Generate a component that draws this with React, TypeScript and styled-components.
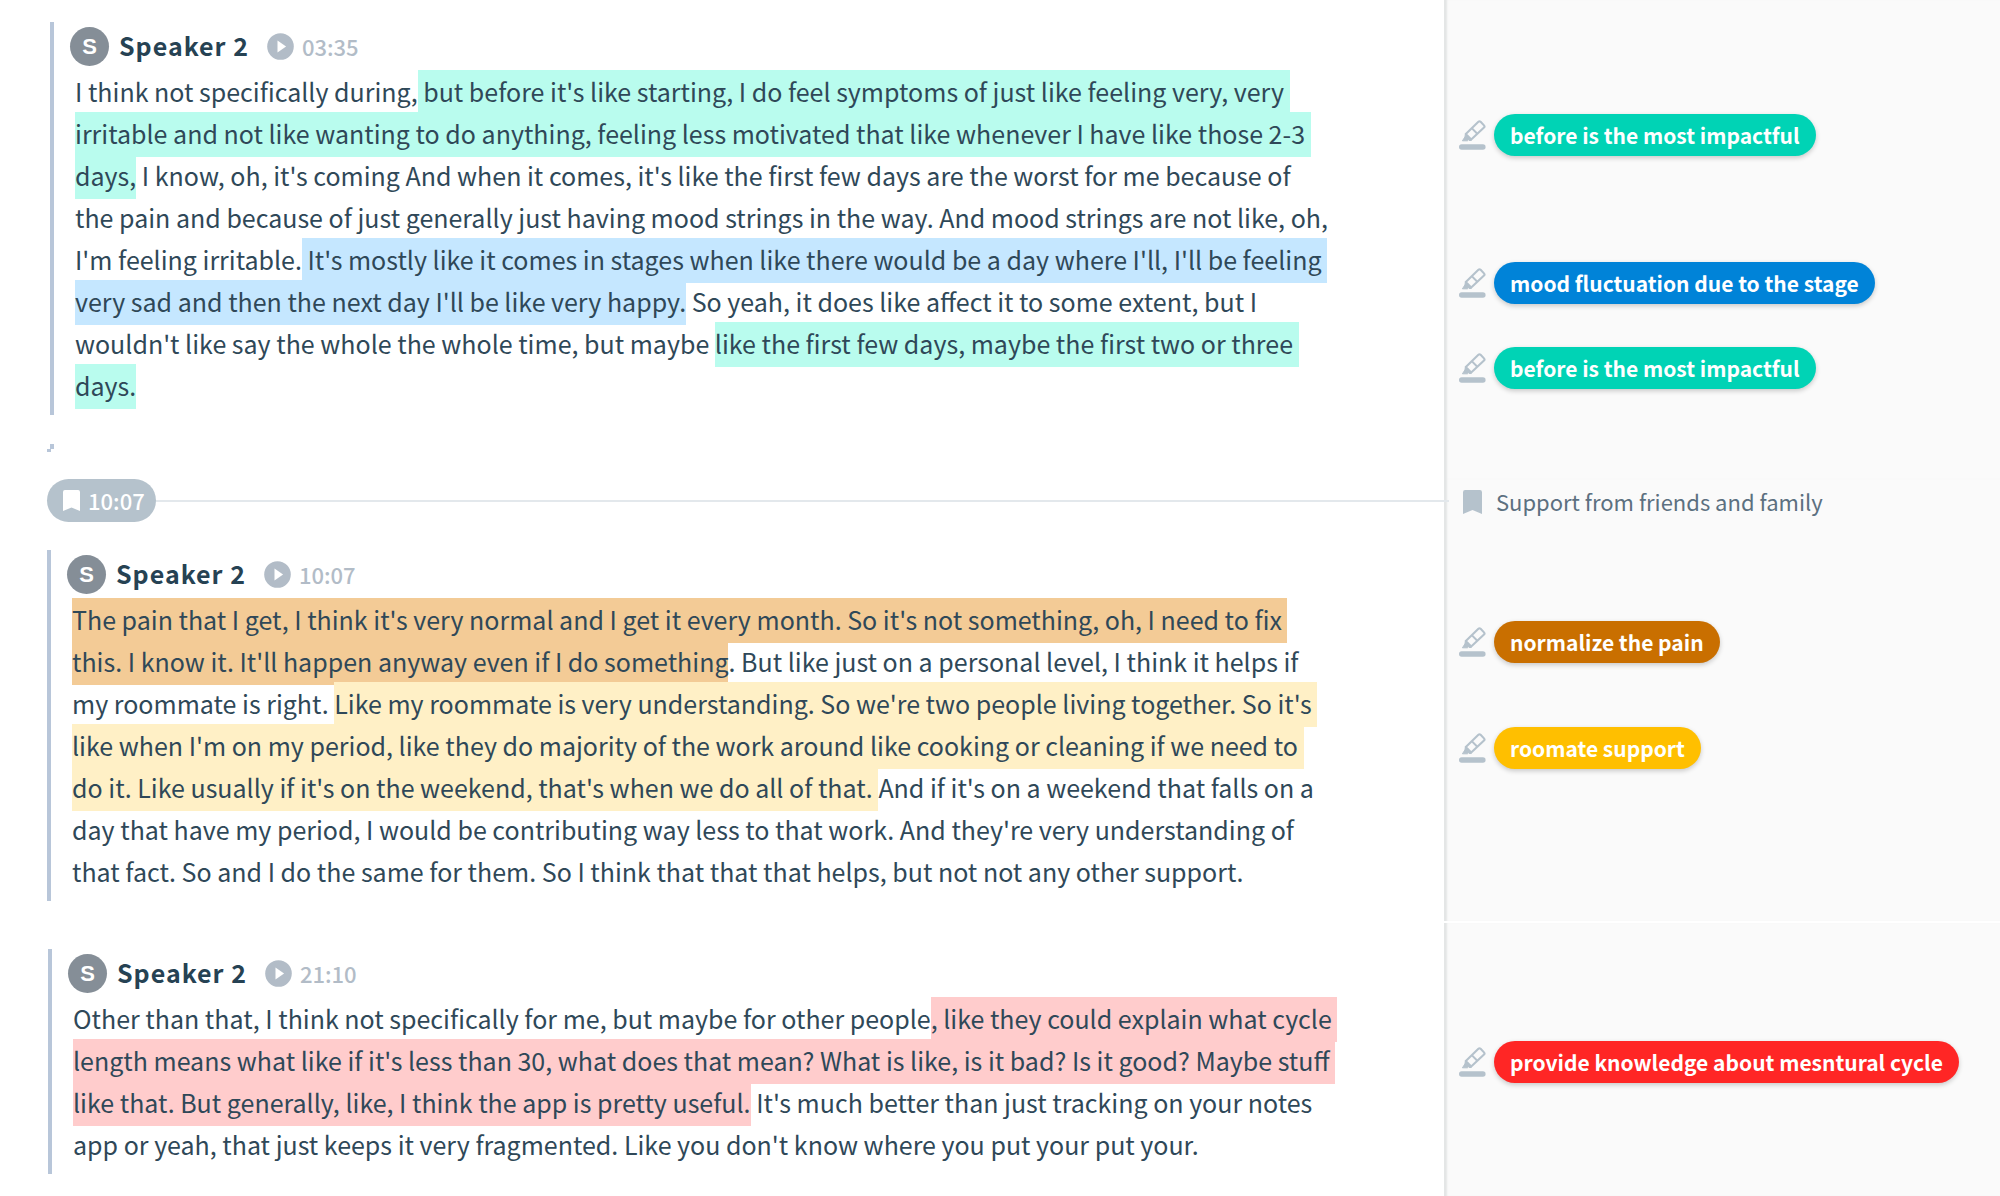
import React from "react";
import styled, { createGlobalStyle } from "styled-components";

const GlobalStyle = createGlobalStyle`
  *, *::before, *::after { box-sizing: border-box; }
  body {
    margin: 0;
    background: #ffffff;
    color: #2f4858;
    font-family: "Noto Sans CJK SC", "Noto Sans", sans-serif;
    font-size: 25px;
    line-height: 42px;
  }
  button {
    margin: 0;
    padding: 0;
    border: 0;
    background: none;
    color: inherit;
    font: inherit;
    cursor: pointer;
  }
`;

const Page = styled.main`
  display: flex;
  flex-direction: column;
  min-height: 100vh;
`;

const Section = styled.section<{ $last?: boolean }>`
  display: grid;
  grid-template-columns: minmax(0, 1444fr) minmax(0, 556fr);
  flex: ${(p) => (p.$last ? "1 0 auto" : "none")};
  margin-top: ${(p) => (p.$last ? 2 : 0)}px;
`;

const Transcript = styled.div<{ $inset: number; $top: number; $bottom: number }>`
  padding: ${(p) => `${p.$top}px 0 ${p.$bottom}px ${p.$inset}px`};
`;

const Sidebar = styled.aside<{ $top: number }>`
  padding: ${(p) => p.$top}px 0 0 13px;
  border-left: 2px solid #e4e6e6;
  background: #fafafa;
  box-shadow: inset 2px 0 2px -1px #e4e6e6;
`;

const Turn = styled.article`
  padding: 5px 0 9px 16px;
  border-left: 4px solid #b8c6d9;
`;

const TurnHeader = styled.header`
  display: flex;
  align-items: center;
  height: 39px;
  margin-bottom: 4px;
`;

const Avatar = styled.span`
  display: grid;
  place-items: center;
  width: 39px;
  height: 39px;
  border-radius: 50%;
  background: #858e97;
  color: #ffffff;
  font: 700 22px/39px "Liberation Sans", Arial, sans-serif;
`;

const SpeakerName = styled.h2`
  margin: 0 18px 0 10px;
  padding-bottom: 4px;
  color: #264253;
  font-size: 25px;
  font-weight: 600;
  line-height: 38px;
  letter-spacing: 1px;
`;

const PlayButton = styled.button`
  display: flex;
  align-items: center;
  gap: 8px;
  color: #b2bcc7;
  font-size: 22px;
  font-weight: 500;
  line-height: 38px;
`;

const Time = styled.time`
  padding-bottom: 2px;
`;

const Paragraph = styled.p<{ $measure: number }>`
  max-width: ${(p) => p.$measure}px;
  margin: 0 0 0 5px;
  white-space: pre-wrap;
`;

const Mark = styled.mark<{ $color: string }>`
  padding: 3px 0 6px;
  background: ${(p) => p.$color};
  color: inherit;
`;

const Divider = styled.div`
  position: relative;
  z-index: 1;
  display: flex;
  align-items: center;
  margin: 0 -5px 28px 0;

  &::after {
    content: "";
    flex: 1;
    height: 2px;
    background: #e3e8ec;
  }
`;

const TimePill = styled.button`
  display: flex;
  align-items: center;
  gap: 8px;
  height: 43px;
  padding: 0 11px 0 16px;
  border-radius: 22px;
  background: #b5c2cc;
  color: #ffffff;
  font-size: 22px;
  font-weight: 500;
  line-height: 38px;
`;

const Fleck = styled.svg`
  display: block;
  margin: 29px 0 0 -3px;
`;

const TagRow = styled.div<{ $gap?: number }>`
  display: flex;
  align-items: center;
  gap: 8px;
  margin-top: ${(p) => p.$gap ?? 0}px;
`;

const Tag = styled.button<{ $color: string }>`
  height: 42px;
  padding: 0 16px;
  border-radius: 21px;
  background: ${(p) => p.$color};
  box-shadow: 0 2px 5px rgba(0, 0, 0, 0.2);
  color: #ffffff;
  font-size: 21px;
  font-weight: 600;
  line-height: 42px;
  white-space: nowrap;
`;

const Chapter = styled.div`
  display: flex;
  align-items: center;
  gap: 14px;
  height: 46px;
  padding-left: 4px;
  color: #5c7080;
  font-size: 22px;

  svg {
    color: #b5c2cc;
  }

  span {
    padding-bottom: 2px;
  }
`;

const BookmarkIcon = ({ width, height }: { width: number; height: number }) => (
  <svg width={width} height={height} viewBox="0 0 18 22" fill="currentColor" preserveAspectRatio="none" aria-hidden="true">
    <path d="M2 0h14A2 2 0 0 1 18 2V22l-9-3.6L0 22V2A2 2 0 0 1 2 0Z" />
  </svg>
);

const PlayIcon = () => (
  <svg width="27" height="27" viewBox="0 0 27 27" aria-hidden="true">
    <circle cx="13.5" cy="13.5" r="13.3" fill="#b2bcc7" />
    <path d="M10.5 7.5v12l8.6-6Z" fill="#ffffff" />
  </svg>
);

const HighlighterIcon = () => (
  <svg width="27" height="30" viewBox="0 0 27 30" fill="none" stroke="#b5c2cc" aria-hidden="true">
    <path d="M19.4 1.8a1.6 1.6 0 0 1 2.2 0l3.4 3.6a1.6 1.6 0 0 1 0 2.2L12.2 19.6 6.8 14Z" strokeWidth="2.1" strokeLinejoin="round" />
    <path d="m13 8.4 5.3 5.4" strokeWidth="2" />
    <path d="M6.4 14.2 5.9 17l-2.5 3.8h5l1.2-1 1.4 1 1.6-.9Z" fill="#b5c2cc" strokeWidth="1" strokeLinejoin="round" />
    <path d="M2.7 27h21.2" strokeWidth="5.4" strokeLinecap="round" />
  </svg>
);

const TEAL = "#b9fcee";
const BLUE = "#c5e7ff";
const ORANGE = "#f3cb96";
const YELLOW = "#fff0c6";
const PINK = "#ffcccc";

interface SpeakerTurnProps {
  time: string;
  measure?: number;
  children: React.ReactNode;
}

const SpeakerTurn = ({ time, measure = 1256, children }: SpeakerTurnProps) => (
  <Turn>
    <TurnHeader>
      <Avatar aria-hidden="true">S</Avatar>
      <SpeakerName>Speaker 2</SpeakerName>
      <PlayButton type="button">
        <PlayIcon />
        <Time>{time}</Time>
      </PlayButton>
    </TurnHeader>
    <Paragraph $measure={measure}>{children}</Paragraph>
  </Turn>
);

const CodeTag = ({ color, gap, label }: { color: string; gap?: number; label: string }) => (
  <TagRow $gap={gap}>
    <HighlighterIcon />
    <Tag type="button" $color={color}>{label}</Tag>
  </TagRow>
);

export default function App() {
  return (
    <>
      <GlobalStyle />
      <Page>
        <Section>
          <Transcript $inset={50} $top={22} $bottom={27}>
            <SpeakerTurn time="03:35">
              I think not specifically during,
              <Mark $color={TEAL}>
                {" but before it's like starting, I do feel symptoms of just like feeling very, very irritable and not like wanting to do anything, feeling less motivated that like whenever I have like those 2-3 days,"}
              </Mark>
              {" I know, oh, it's coming And when it comes, it's like the first few days are the worst for me because of the pain and because of just generally just having mood strings in the way. And mood strings are not like, oh, I'm feeling irritable."}
              <Mark $color={BLUE}>
                {" It's mostly like it comes in stages when like there would be a day where I'll, I'll be feeling very sad and then the next day I'll be like very happy."}
              </Mark>
              {" So yeah, it does like affect it to some extent, but I wouldn't like say the whole the whole time, but maybe "}
              <Mark $color={TEAL}>like the first few days, maybe the first two or three days.</Mark>
            </SpeakerTurn>
            <Fleck width="7" height="8" viewBox="0 0 7 8" fill="#b8c6d9" aria-hidden="true">
              <path d="M3 0h4v5H4v3H0V5h3Z" />
            </Fleck>
          </Transcript>
          <Sidebar $top={114}>
            <CodeTag color="#00d3b5" label="before is the most impactful" />
            <CodeTag color="#0083d8" gap={106} label="mood fluctuation due to the stage" />
            <CodeTag color="#00d3b5" gap={43} label="before is the most impactful" />
          </Sidebar>
        </Section>
        <Section>
          <Transcript $inset={47} $top={0} $bottom={20}>
            <Divider>
              <TimePill type="button">
                <BookmarkIcon width={17} height={21} />
                <Time>10:07</Time>
              </TimePill>
            </Divider>
            <SpeakerTurn time="10:07">
              <Mark $color={ORANGE}>
                The pain that I get, I think it's very normal and I get it every month. So it's not something, oh, I need to fix this. I know it. It'll happen anyway even if I do something
              </Mark>
              {". But like just on a personal level, I think it helps if my roommate is right. "}
              <Mark $color={YELLOW}>
                {"Like my roommate is very understanding. So we're two people living together. So it's like when I'm on my period, like they do majority of the work around like cooking or cleaning if we need to do it. Like usually if it's on the weekend, that's when we do all of that. "}
              </Mark>
              And if it's on a weekend that falls on a day that have my period, I would be contributing way less to that work. And they're very understanding of that fact. So and I do the same for them. So I think that that that helps, but not not any other support.
            </SpeakerTurn>
          </Transcript>
          <Sidebar $top={0}>
            <Chapter>
              <BookmarkIcon width={19} height={24} />
              <span>Support from friends and family</span>
            </Chapter>
            <CodeTag color="#c96f00" gap={96} label="normalize the pain" />
            <CodeTag color="#ffbf00" gap={64} label="roomate support" />
          </Sidebar>
        </Section>
        <Section $last>
          <Transcript $inset={48} $top={26} $bottom={22}>
            <SpeakerTurn time="21:10" measure={1268}>
              Other than that, I think not specifically for me, but maybe for other people
              <Mark $color={PINK}>
                , like they could explain what cycle length means what like if it's less than 30, what does that mean? What is like, is it bad? Is it good? Maybe stuff like that. But generally, like, I think the app is pretty useful.
              </Mark>
              {" It's much better than just tracking on your notes app or yeah, that just keeps it very fragmented. Like you don't know where you put your put your."}
            </SpeakerTurn>
          </Transcript>
          <Sidebar $top={118}>
            <CodeTag color="#ff2625" label="provide knowledge about mesntural cycle" />
          </Sidebar>
        </Section>
      </Page>
    </>
  );
}
